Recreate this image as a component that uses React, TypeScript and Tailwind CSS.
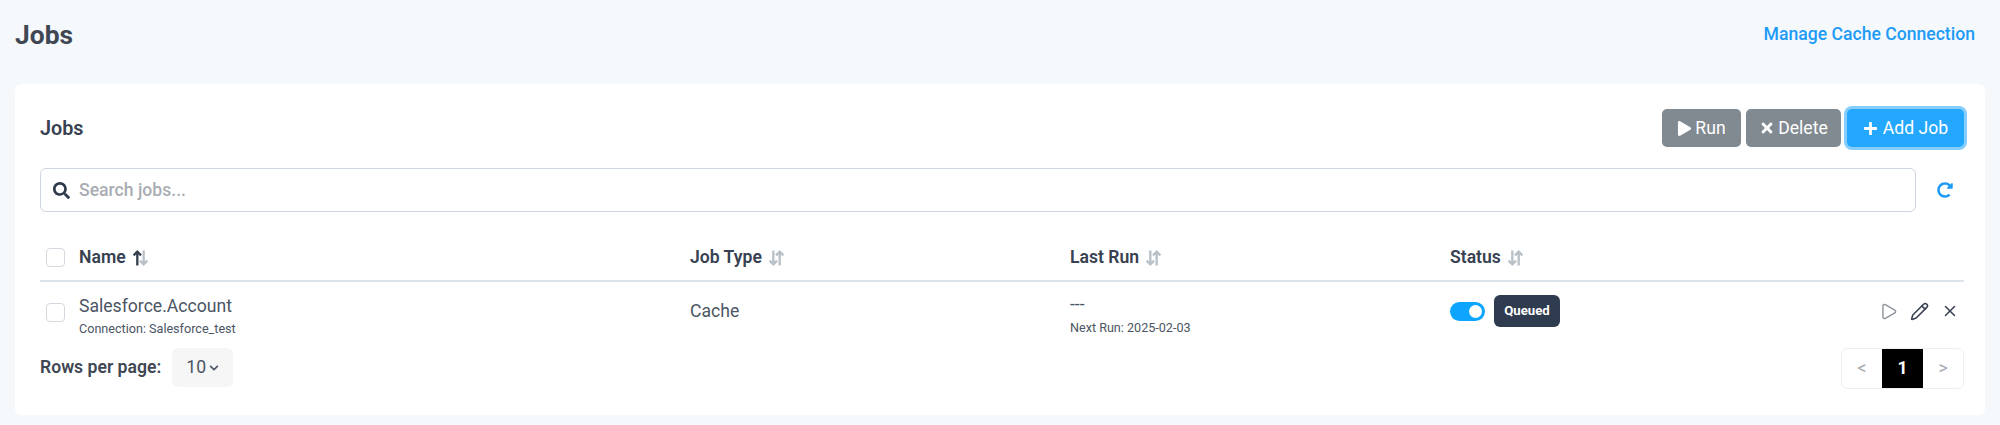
import { useState } from 'react'
import { Pencil, Play, X } from 'lucide-react'
import { FaChevronDown, FaPlay, FaPlus, FaRedoAlt, FaSearch, FaTimes } from 'react-icons/fa'

// Two arrows, the left one up or down depending on the column state
function SortIcon({ active = false }: { active?: boolean }) {
  if (active) {
    return (
      <svg width="17" height="18" viewBox="0 0 16 16" fill="none" strokeWidth="2.2" className="ml-1.5 mt-0.5">
        <path d="M5 15V2M1.5 5.5 5 2l3.5 3.5" stroke="#374151" />
        <path d="M11 1v13M7.5 10.5 11 14l3.5-3.5" stroke="#b8c0c8" />
      </svg>
    )
  }
  return (
    <svg width="17" height="18" viewBox="0 0 16 16" fill="none" strokeWidth="2.2" stroke="#b8c0c8" className="ml-1.5 mt-0.5">
      <path d="M5 1v13M1.5 10.5 5 14l3.5-3.5" />
      <path d="M11 15V2M7.5 5.5 11 2l3.5 3.5" />
    </svg>
  )
}

function Checkbox() {
  return <span className="block w-[19px] h-[19px] rounded-[4px] border border-[#d5d9df] bg-white" />
}

function HeaderCell({ label, active }: { label: string; active?: boolean }) {
  return (
    <div className="flex items-center text-[17.6px] leading-[22px] font-semibold text-[#374151]">
      {label}
      <SortIcon active={active} />
    </div>
  )
}

export default function App() {
  const [enabled] = useState(true)

  return (
    <div className="h-[425px] bg-[#f5f9fc] font-['Roboto',sans-serif] text-[#374151] px-[15px] overflow-hidden">
      {/* Page header */}
      <header className="h-[84px] flex items-start justify-between">
        <h1 className="text-[26.4px] leading-[30px] font-bold text-[#3f4753] mt-[20px]">Jobs</h1>
        <a className="text-[17.6px] leading-[22px] font-medium text-[#1d9bf7] mt-[23px] mr-[10px]">Manage Cache Connection</a>
      </header>

      {/* Card */}
      <main className="h-[331px] bg-white rounded-[6px] pl-[25px] pr-[21px]">
        <div className="h-[84px] flex items-start justify-between">
          <h2 className="text-[19.8px] leading-[24px] font-semibold text-[#374151] mt-[33px]">Jobs</h2>
          <div className="flex items-center gap-[5px] mt-[25px]">
            <button className="h-[38px] w-[79px] flex items-center justify-center gap-[3px] rounded-[5px] bg-[#828a91] text-white text-[17.6px]">
              <FaPlay className="w-[15px] h-[15px]" />
              Run
            </button>
            <button className="h-[38px] w-[95px] flex items-center justify-center gap-[3px] rounded-[5px] bg-[#828a91] text-white text-[17.6px]">
              <FaTimes className="w-[16px] h-[16px]" />
              Delete
            </button>
            <button className="h-[38px] w-[117px] ml-[1px] flex items-center justify-center gap-[5px] rounded-[5px] bg-[#24a8ff] text-white text-[17.6px] ring-[3px] ring-[#86cdfb]">
              <FaPlus className="w-[15px] h-[15px]" />
              Add Job
            </button>
          </div>
        </div>

        {/* Search */}
        <div className="flex items-center">
          <div className="h-[44px] w-[1876px] flex items-center gap-[9px] rounded-[6px] border border-[#ced6e0] pl-[12px]">
            <FaSearch className="w-[17px] h-[17px] text-[#2f3a4a]" />
            <span className="text-[17.6px] font-medium text-[#a9adb3]">Search jobs...</span>
          </div>
          <FaRedoAlt className="ml-[21px] w-[16px] h-[16px] text-[#1d9bf7]" />
        </div>

        {/* Table */}
        <div className="mt-[26px] h-[44px] border-b-2 border-[#dde3eb] grid grid-cols-[39px_611px_380px_380px_1fr] items-start pt-[8px]">
          <div className="pl-[6px] pt-[2px]"><Checkbox /></div>
          <HeaderCell label="Name" active />
          <HeaderCell label="Job Type" />
          <HeaderCell label="Last Run" />
          <HeaderCell label="Status" />
        </div>
        <div className="h-[66px] grid grid-cols-[39px_611px_380px_380px_1fr] items-start">
          <div className="pl-[6px] pt-[21px]"><Checkbox /></div>
          <div className="pt-[13px]">
            <div className="text-[17.6px] leading-[22px] text-[#4b5563]">Salesforce.Account</div>
            <div className="text-[12.6px] leading-[14px] mt-[5px] text-[#4b5563]">Connection: Salesforce_test</div>
          </div>
          <div className="text-[17.6px] leading-[22px] text-[#4b5563] pt-[18px]">Cache</div>
          <div className="pt-[12px]">
            <div className="text-[17.6px] leading-[20px] text-[#4b5563]">---</div>
            <div className="text-[12.6px] leading-[14px] mt-[7px] text-[#4b5563]">Next Run: 2025-02-03</div>
          </div>
          <div className="flex items-center pt-[13px]">
            <span className={`w-[35px] h-[19px] rounded-full flex items-center justify-end pr-[3px] ${enabled ? 'bg-[#0ea5ff]' : 'bg-gray-300'}`}>
              <span className="w-[13px] h-[13px] rounded-full bg-white" />
            </span>
            <span className="ml-[9px] h-[32px] w-[66px] flex items-center justify-center rounded-[6px] bg-[#2f3b4f] text-white text-[13.2px] font-bold">Queued</span>
            <div className="ml-auto flex items-center gap-[12px] text-[#374151] pr-[5px]">
              <Play className="w-[19px] h-[19px] text-[#8c939b]" strokeWidth={1.75} />
              <Pencil className="w-[19px] h-[19px]" strokeWidth={2} />
              <X className="w-[18px] h-[18px]" strokeWidth={2} />
            </div>
          </div>
        </div>

        {/* Footer */}
        <div className="flex items-start justify-between">
          <div className="flex items-center gap-[11px]">
            <span className="text-[17.6px] font-semibold text-[#3f4753]">Rows per page:</span>
            <div className="h-[39px] w-[61px] flex items-center justify-center gap-[3px] rounded-[6px] bg-[#f6f6f6] text-[17.6px] text-[#4b5563]">
              10
              <FaChevronDown className="w-[10px] h-[10px]" />
            </div>
          </div>
          <div className="flex h-[41px] w-[123px] rounded-[6px] border border-[#eceff4] overflow-hidden text-[17.6px]">
            <span className="flex-1 flex items-center justify-center text-[#a4a9b0]">&lt;</span>
            <span className="w-[41px] flex items-center justify-center bg-black text-white font-bold">1</span>
            <span className="flex-1 flex items-center justify-center text-[#a4a9b0]">&gt;</span>
          </div>
        </div>
      </main>
    </div>
  )
}
